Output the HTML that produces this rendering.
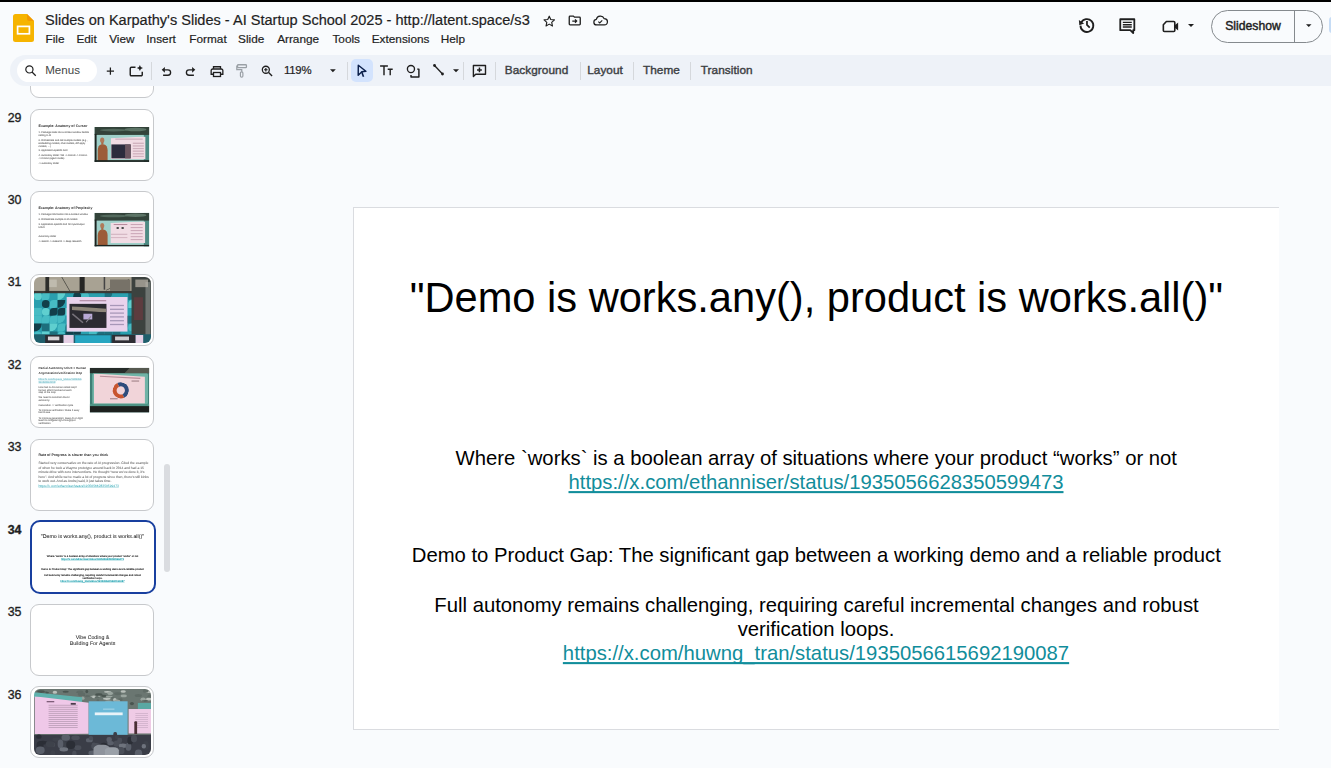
<!DOCTYPE html>
<html><head><meta charset="utf-8"><title>Slides</title>
<style>
html,body{margin:0;padding:0;}
body{width:1331px;height:768px;overflow:hidden;background:#f9fbfd;position:relative;font-family:"Liberation Sans",sans-serif;}
.t{position:absolute;line-height:1;white-space:pre;}
.ic{position:absolute;overflow:visible;}
.abs{position:absolute;}
.thumb{position:absolute;left:30px;width:122px;height:70px;border:1px solid #c7c9cc;border-radius:9px;background:#fff;overflow:hidden;}
.thumb.sel{left:29.5px;width:122px;height:70px;border:2px solid #183f9f;border-radius:10px;}
.thumb.sel .inner{top:2.8px;}
.inner{position:absolute;left:2.6px;top:2px;width:117.3px;height:66px;border-radius:6px;overflow:hidden;background:#fff;}
.num{position:absolute;font-size:11.7px;line-height:1;color:#1f1f1f;text-align:right;width:30px;left:-9px;}
.sep{position:absolute;width:1px;height:18px;top:62px;background:#d5d8dc;}
</style></head><body>
<div class="thumb" style="top:26.34px"><div class="inner" id="in28"></div></div>
<div class="thumb" style="top:108.80px"><div class="inner" id="in29"><div style="position:absolute;left:0;top:0;width:926px;height:521px;transform:scale(0.12667);transform-origin:0 0;background:#fff;overflow:hidden;will-change:transform;text-rendering:geometricPrecision;font-family:'Liberation Sans',sans-serif;"><div style="position:absolute;left:36px;top:98.3px;font-size:28px;line-height:1;white-space:pre;color:#333;font-weight:700;">Example: Anatomy of Cursor</div><div style="position:absolute;left:36px;top:149.5px;font-size:19.5px;line-height:1;white-space:pre;color:#6a6a6a;font-weight:400;-webkit-text-stroke:0.8px #888;">1. Package state into a context window before</div><div style="position:absolute;left:36px;top:172.5px;font-size:19.5px;line-height:1;white-space:pre;color:#6a6a6a;font-weight:400;-webkit-text-stroke:0.8px #888;">calling LLM</div><div style="position:absolute;left:36px;top:209.5px;font-size:19.5px;line-height:1;white-space:pre;color:#6a6a6a;font-weight:400;-webkit-text-stroke:0.8px #888;">2. Orchestrate and call multiple models (e.g.,</div><div style="position:absolute;left:36px;top:233.5px;font-size:19.5px;line-height:1;white-space:pre;color:#6a6a6a;font-weight:400;-webkit-text-stroke:0.8px #888;">embedding models, chat models, diff apply</div><div style="position:absolute;left:36px;top:257.5px;font-size:19.5px;line-height:1;white-space:pre;color:#6a6a6a;font-weight:400;-webkit-text-stroke:0.8px #888;">models, ...)</div><div style="position:absolute;left:36px;top:293.5px;font-size:19.5px;line-height:1;white-space:pre;color:#6a6a6a;font-weight:400;-webkit-text-stroke:0.8px #888;">3. Application-specific GUI</div><div style="position:absolute;left:36px;top:333.5px;font-size:19.5px;line-height:1;white-space:pre;color:#6a6a6a;font-weight:400;-webkit-text-stroke:0.8px #888;">4. Autonomy slider: Tab -> cmd+K -> Cmd+L</div><div style="position:absolute;left:36px;top:353.5px;font-size:19.5px;line-height:1;white-space:pre;color:#6a6a6a;font-weight:400;-webkit-text-stroke:0.8px #888;">-> Cmd+I (agent mode)</div><div style="position:absolute;left:36px;top:393.5px;font-size:19.5px;line-height:1;white-space:pre;color:#6a6a6a;font-weight:400;-webkit-text-stroke:0.8px #888;">-> autonomy slider</div><div style="position:absolute;left:477px;top:118px;width:433px;height:276px;overflow:hidden;"><div style="position:absolute;left:0px;top:0px;width:433px;height:276px;background:#9fd0c9;"></div><div style="position:absolute;left:389.7px;top:0px;width:43.300000000000004px;height:276px;background:#4d8a83;"></div><div style="position:absolute;left:0px;top:0px;width:433px;height:63.480000000000004px;background:#33433a;"></div><div style="position:absolute;left:43.300000000000004px;top:13.8px;width:216.5px;height:22.080000000000002px;background:#52695c;border-radius:50%;"></div><div style="position:absolute;left:238.15px;top:5.5200000000000005px;width:173.20000000000002px;height:27.6px;background:#5c7466;border-radius:50%;"></div><div style="position:absolute;left:0px;top:55.2px;width:17.32px;height:220.8px;background:#1e2420;"></div><div style="position:absolute;left:127.735px;top:74.52000000000001px;width:277.12px;height:182.16px;background:#f1dce4;clip-path:polygon(0 8%,100% 0,100% 100%,0 100%);"></div><div style="position:absolute;left:134.23px;top:138.0px;width:151.54999999999998px;height:110.4px;background:#2b2b3d;"></div><div style="position:absolute;left:242.48000000000002px;top:138.0px;width:43.300000000000004px;height:110.4px;background:#6b5560;"></div><div style="position:absolute;left:303.09999999999997px;top:124.2px;width:86.60000000000001px;height:9.66px;background:#cfb0bd;"></div><div style="position:absolute;left:303.09999999999997px;top:144.9px;width:86.60000000000001px;height:9.66px;background:#cfb0bd;"></div><div style="position:absolute;left:303.09999999999997px;top:165.6px;width:86.60000000000001px;height:9.66px;background:#cfb0bd;"></div><div style="position:absolute;left:303.09999999999997px;top:186.3px;width:86.60000000000001px;height:9.66px;background:#cfb0bd;"></div><div style="position:absolute;left:303.09999999999997px;top:207.0px;width:86.60000000000001px;height:9.66px;background:#cfb0bd;"></div><div style="position:absolute;left:303.09999999999997px;top:227.7px;width:86.60000000000001px;height:9.66px;background:#cfb0bd;"></div><div style="position:absolute;left:164.54px;top:91.08px;width:216.5px;height:11.040000000000001px;background:#d3b5c2;"></div><div style="position:absolute;left:25.98px;top:138.0px;width:77.94px;height:132.48px;background:#9c5c38;border-radius:35% 35% 0 0;"></div><div style="position:absolute;left:45.464999999999996px;top:82.8px;width:32.475px;height:44.160000000000004px;background:#b07a5a;border-radius:50%;"></div><div style="position:absolute;left:54.125px;top:121.44px;width:17.32px;height:22.080000000000002px;background:#a76c4a;"></div><div style="position:absolute;left:0px;top:262.2px;width:433px;height:13.8px;background:#1d2420;"></div></div></div></div></div>
<div class="t" style="left:-178.50px;width:200px;text-align:right;top:111.50px;font-size:12.4px;color:#1f1f1f;font-weight:400;-webkit-text-stroke:0.35px #1f1f1f;">29</div>
<div class="thumb" style="top:191.26px"><div class="inner" id="in30"><div style="position:absolute;left:0;top:0;width:926px;height:521px;transform:scale(0.12667);transform-origin:0 0;background:#fff;overflow:hidden;will-change:transform;text-rendering:geometricPrecision;font-family:'Liberation Sans',sans-serif;"><div style="position:absolute;left:35px;top:96.3px;font-size:28px;line-height:1;white-space:pre;color:#333;font-weight:700;">Example: Anatomy of Perplexity</div><div style="position:absolute;left:35px;top:153.5px;font-size:19.5px;line-height:1;white-space:pre;color:#6a6a6a;font-weight:400;-webkit-text-stroke:0.8px #888;">1. Package information into a context window</div><div style="position:absolute;left:35px;top:188.5px;font-size:19.5px;line-height:1;white-space:pre;color:#6a6a6a;font-weight:400;-webkit-text-stroke:0.8px #888;">2. Orchestrate multiple LLM models</div><div style="position:absolute;left:35px;top:229.5px;font-size:19.5px;line-height:1;white-space:pre;color:#6a6a6a;font-weight:400;-webkit-text-stroke:0.8px #888;">3. Application-specific GUI for input/output</div><div style="position:absolute;left:35px;top:249.5px;font-size:19.5px;line-height:1;white-space:pre;color:#6a6a6a;font-weight:400;-webkit-text-stroke:0.8px #888;">UI/UX</div><div style="position:absolute;left:35px;top:324.5px;font-size:19.5px;line-height:1;white-space:pre;color:#6a6a6a;font-weight:400;-webkit-text-stroke:0.8px #888;">Autonomy slider</div><div style="position:absolute;left:35px;top:366.5px;font-size:19.5px;line-height:1;white-space:pre;color:#6a6a6a;font-weight:400;-webkit-text-stroke:0.8px #888;">-> search -> research -> deep research</div><div style="position:absolute;left:477px;top:149px;width:433px;height:266px;overflow:hidden;"><div style="position:absolute;left:0px;top:0px;width:433px;height:266px;background:#9fd0c9;"></div><div style="position:absolute;left:389.7px;top:0px;width:43.300000000000004px;height:266px;background:#4d8a83;"></div><div style="position:absolute;left:0px;top:0px;width:433px;height:61.18px;background:#33433a;"></div><div style="position:absolute;left:43.300000000000004px;top:13.3px;width:216.5px;height:21.28px;background:#52695c;border-radius:50%;"></div><div style="position:absolute;left:238.15px;top:5.32px;width:173.20000000000002px;height:26.6px;background:#5c7466;border-radius:50%;"></div><div style="position:absolute;left:0px;top:53.2px;width:17.32px;height:212.8px;background:#1e2420;"></div><div style="position:absolute;left:125.57px;top:66.5px;width:277.12px;height:172.9px;background:#f1dce4;clip-path:polygon(0 8%,100% 0,100% 100%,0 100%);"></div><div style="position:absolute;left:173.20000000000002px;top:111.72px;width:21.650000000000002px;height:15.959999999999999px;background:#444;border-radius:50%;"></div><div style="position:absolute;left:212.17px;top:111.72px;width:21.650000000000002px;height:15.959999999999999px;background:#444;border-radius:50%;"></div><div style="position:absolute;left:285.78000000000003px;top:87.78px;width:95.26px;height:7.9799999999999995px;background:#c9a5b5;"></div><div style="position:absolute;left:285.78000000000003px;top:111.72000000000001px;width:95.26px;height:7.9799999999999995px;background:#c9a5b5;"></div><div style="position:absolute;left:285.78000000000003px;top:135.66px;width:95.26px;height:7.9799999999999995px;background:#c9a5b5;"></div><div style="position:absolute;left:285.78000000000003px;top:159.60000000000002px;width:95.26px;height:7.9799999999999995px;background:#c9a5b5;"></div><div style="position:absolute;left:285.78000000000003px;top:183.54px;width:95.26px;height:7.9799999999999995px;background:#c9a5b5;"></div><div style="position:absolute;left:285.78000000000003px;top:207.48000000000002px;width:95.26px;height:7.9799999999999995px;background:#c9a5b5;"></div><div style="position:absolute;left:151.54999999999998px;top:87.78px;width:108.25px;height:7.9799999999999995px;background:#b88a9c;"></div><div style="position:absolute;left:129.9px;top:164.92px;width:129.9px;height:7.9799999999999995px;background:#d0b0bd;"></div><div style="position:absolute;left:129.9px;top:191.51999999999998px;width:129.9px;height:7.9799999999999995px;background:#d0b0bd;"></div><div style="position:absolute;left:25.98px;top:133.0px;width:77.94px;height:127.67999999999999px;background:#9c5c38;border-radius:35% 35% 0 0;"></div><div style="position:absolute;left:45.464999999999996px;top:79.8px;width:32.475px;height:42.56px;background:#b07a5a;border-radius:50%;"></div><div style="position:absolute;left:54.125px;top:117.04px;width:17.32px;height:21.28px;background:#a76c4a;"></div><div style="position:absolute;left:0px;top:252.7px;width:433px;height:13.3px;background:#1d2420;"></div></div></div></div></div>
<div class="t" style="left:-178.50px;width:200px;text-align:right;top:193.96px;font-size:12.4px;color:#1f1f1f;font-weight:400;-webkit-text-stroke:0.35px #1f1f1f;">30</div>
<div class="thumb" style="top:273.72px"><div class="inner" id="in31"><div style="position:absolute;left:0;top:0;width:926px;height:521px;transform:scale(0.12667);transform-origin:0 0;background:#fff;overflow:hidden;will-change:transform;text-rendering:geometricPrecision;font-family:'Liberation Sans',sans-serif;"><div style="position:absolute;left:0px;top:0px;width:926px;height:521px;background:#2a9fae;"></div><div style="position:absolute;left:0px;top:120px;width:62px;height:62px;background:#5fcfcf;border-radius:50%;"></div><div style="position:absolute;left:0px;top:182px;width:62px;height:62px;background:#2a9fae;border-radius:50% 0;"></div><div style="position:absolute;left:0px;top:244px;width:62px;height:62px;background:#47bcc4;border-radius:0;"></div><div style="position:absolute;left:0px;top:306px;width:62px;height:62px;background:#47bcc4;border-radius:0;"></div><div style="position:absolute;left:0px;top:368px;width:62px;height:62px;background:#123f4a;border-radius:0 0 100% 0;"></div><div style="position:absolute;left:0px;top:430px;width:62px;height:62px;background:#47bcc4;border-radius:50%;"></div><div style="position:absolute;left:0px;top:492px;width:62px;height:62px;background:#5fcfcf;border-radius:50% 0;"></div><div style="position:absolute;left:62px;top:120px;width:62px;height:62px;background:#47bcc4;border-radius:50% 0;"></div><div style="position:absolute;left:62px;top:182px;width:62px;height:62px;background:#123f4a;border-radius:50%;"></div><div style="position:absolute;left:62px;top:244px;width:62px;height:62px;background:#5fcfcf;border-radius:50%;"></div><div style="position:absolute;left:62px;top:306px;width:62px;height:62px;background:#47bcc4;border-radius:50% 0;"></div><div style="position:absolute;left:62px;top:368px;width:62px;height:62px;background:#1d6f7d;border-radius:0;"></div><div style="position:absolute;left:62px;top:430px;width:62px;height:62px;background:#5fcfcf;border-radius:0;"></div><div style="position:absolute;left:62px;top:492px;width:62px;height:62px;background:#2a9fae;border-radius:0;"></div><div style="position:absolute;left:124px;top:120px;width:62px;height:62px;background:#2a9fae;border-radius:50% 0;"></div><div style="position:absolute;left:124px;top:182px;width:62px;height:62px;background:#47bcc4;border-radius:50% 0;"></div><div style="position:absolute;left:124px;top:244px;width:62px;height:62px;background:#123f4a;border-radius:50% 0;"></div><div style="position:absolute;left:124px;top:306px;width:62px;height:62px;background:#47bcc4;border-radius:50% 0;"></div><div style="position:absolute;left:124px;top:368px;width:62px;height:62px;background:#5fcfcf;border-radius:0 0 100% 0;"></div><div style="position:absolute;left:124px;top:430px;width:62px;height:62px;background:#1d6f7d;border-radius:0;"></div><div style="position:absolute;left:124px;top:492px;width:62px;height:62px;background:#5fcfcf;border-radius:50% 0;"></div><div style="position:absolute;left:186px;top:120px;width:62px;height:62px;background:#5fcfcf;border-radius:0 0 100% 0;"></div><div style="position:absolute;left:186px;top:182px;width:62px;height:62px;background:#123f4a;border-radius:0 0 100% 0;"></div><div style="position:absolute;left:186px;top:244px;width:62px;height:62px;background:#123f4a;border-radius:50% 0;"></div><div style="position:absolute;left:186px;top:306px;width:62px;height:62px;background:#47bcc4;border-radius:0 0 100% 0;"></div><div style="position:absolute;left:186px;top:368px;width:62px;height:62px;background:#47bcc4;border-radius:50% 0;"></div><div style="position:absolute;left:186px;top:430px;width:62px;height:62px;background:#47bcc4;border-radius:50%;"></div><div style="position:absolute;left:186px;top:492px;width:62px;height:62px;background:#2a9fae;border-radius:0;"></div><div style="position:absolute;left:248px;top:120px;width:62px;height:62px;background:#2a9fae;border-radius:50%;"></div><div style="position:absolute;left:248px;top:182px;width:62px;height:62px;background:#2a9fae;border-radius:0;"></div><div style="position:absolute;left:248px;top:244px;width:62px;height:62px;background:#5fcfcf;border-radius:0 0 100% 0;"></div><div style="position:absolute;left:248px;top:306px;width:62px;height:62px;background:#2a9fae;border-radius:0;"></div><div style="position:absolute;left:248px;top:368px;width:62px;height:62px;background:#1d6f7d;border-radius:50% 0;"></div><div style="position:absolute;left:248px;top:430px;width:62px;height:62px;background:#123f4a;border-radius:0;"></div><div style="position:absolute;left:248px;top:492px;width:62px;height:62px;background:#2a9fae;border-radius:0;"></div><div style="position:absolute;left:310px;top:120px;width:62px;height:62px;background:#123f4a;border-radius:50%;"></div><div style="position:absolute;left:310px;top:182px;width:62px;height:62px;background:#1d6f7d;border-radius:0 0 100% 0;"></div><div style="position:absolute;left:310px;top:244px;width:62px;height:62px;background:#123f4a;border-radius:50% 0;"></div><div style="position:absolute;left:310px;top:306px;width:62px;height:62px;background:#1d6f7d;border-radius:0;"></div><div style="position:absolute;left:310px;top:368px;width:62px;height:62px;background:#47bcc4;border-radius:0;"></div><div style="position:absolute;left:310px;top:430px;width:62px;height:62px;background:#123f4a;border-radius:0 0 100% 0;"></div><div style="position:absolute;left:310px;top:492px;width:62px;height:62px;background:#47bcc4;border-radius:0 0 100% 0;"></div><div style="position:absolute;left:372px;top:120px;width:62px;height:62px;background:#47bcc4;border-radius:50%;"></div><div style="position:absolute;left:372px;top:182px;width:62px;height:62px;background:#1d6f7d;border-radius:0 0 100% 0;"></div><div style="position:absolute;left:372px;top:244px;width:62px;height:62px;background:#1d6f7d;border-radius:0;"></div><div style="position:absolute;left:372px;top:306px;width:62px;height:62px;background:#1d6f7d;border-radius:0;"></div><div style="position:absolute;left:372px;top:368px;width:62px;height:62px;background:#5fcfcf;border-radius:50% 0;"></div><div style="position:absolute;left:372px;top:430px;width:62px;height:62px;background:#2a9fae;border-radius:0 0 100% 0;"></div><div style="position:absolute;left:372px;top:492px;width:62px;height:62px;background:#5fcfcf;border-radius:0;"></div><div style="position:absolute;left:434px;top:120px;width:62px;height:62px;background:#2a9fae;border-radius:0 0 100% 0;"></div><div style="position:absolute;left:434px;top:182px;width:62px;height:62px;background:#2a9fae;border-radius:50%;"></div><div style="position:absolute;left:434px;top:244px;width:62px;height:62px;background:#123f4a;border-radius:50% 0;"></div><div style="position:absolute;left:434px;top:306px;width:62px;height:62px;background:#123f4a;border-radius:50% 0;"></div><div style="position:absolute;left:434px;top:368px;width:62px;height:62px;background:#47bcc4;border-radius:0;"></div><div style="position:absolute;left:434px;top:430px;width:62px;height:62px;background:#47bcc4;border-radius:0 0 100% 0;"></div><div style="position:absolute;left:434px;top:492px;width:62px;height:62px;background:#123f4a;border-radius:50%;"></div><div style="position:absolute;left:496px;top:120px;width:62px;height:62px;background:#2a9fae;border-radius:50% 0;"></div><div style="position:absolute;left:496px;top:182px;width:62px;height:62px;background:#2a9fae;border-radius:0 0 100% 0;"></div><div style="position:absolute;left:496px;top:244px;width:62px;height:62px;background:#47bcc4;border-radius:0 0 100% 0;"></div><div style="position:absolute;left:496px;top:306px;width:62px;height:62px;background:#1d6f7d;border-radius:50% 0;"></div><div style="position:absolute;left:496px;top:368px;width:62px;height:62px;background:#47bcc4;border-radius:0 0 100% 0;"></div><div style="position:absolute;left:496px;top:430px;width:62px;height:62px;background:#1d6f7d;border-radius:50% 0;"></div><div style="position:absolute;left:496px;top:492px;width:62px;height:62px;background:#47bcc4;border-radius:50%;"></div><div style="position:absolute;left:558px;top:120px;width:62px;height:62px;background:#1d6f7d;border-radius:0 0 100% 0;"></div><div style="position:absolute;left:558px;top:182px;width:62px;height:62px;background:#123f4a;border-radius:0 0 100% 0;"></div><div style="position:absolute;left:558px;top:244px;width:62px;height:62px;background:#2a9fae;border-radius:0 0 100% 0;"></div><div style="position:absolute;left:558px;top:306px;width:62px;height:62px;background:#123f4a;border-radius:0;"></div><div style="position:absolute;left:558px;top:368px;width:62px;height:62px;background:#47bcc4;border-radius:0;"></div><div style="position:absolute;left:558px;top:430px;width:62px;height:62px;background:#1d6f7d;border-radius:0 0 100% 0;"></div><div style="position:absolute;left:558px;top:492px;width:62px;height:62px;background:#2a9fae;border-radius:50% 0;"></div><div style="position:absolute;left:620px;top:120px;width:62px;height:62px;background:#2a9fae;border-radius:0 0 100% 0;"></div><div style="position:absolute;left:620px;top:182px;width:62px;height:62px;background:#5fcfcf;border-radius:0 0 100% 0;"></div><div style="position:absolute;left:620px;top:244px;width:62px;height:62px;background:#5fcfcf;border-radius:0 0 100% 0;"></div><div style="position:absolute;left:620px;top:306px;width:62px;height:62px;background:#2a9fae;border-radius:0 0 100% 0;"></div><div style="position:absolute;left:620px;top:368px;width:62px;height:62px;background:#2a9fae;border-radius:50% 0;"></div><div style="position:absolute;left:620px;top:430px;width:62px;height:62px;background:#1d6f7d;border-radius:0;"></div><div style="position:absolute;left:620px;top:492px;width:62px;height:62px;background:#47bcc4;border-radius:50%;"></div><div style="position:absolute;left:682px;top:120px;width:62px;height:62px;background:#2a9fae;border-radius:50%;"></div><div style="position:absolute;left:682px;top:182px;width:62px;height:62px;background:#2a9fae;border-radius:50%;"></div><div style="position:absolute;left:682px;top:244px;width:62px;height:62px;background:#2a9fae;border-radius:50%;"></div><div style="position:absolute;left:682px;top:306px;width:62px;height:62px;background:#123f4a;border-radius:0;"></div><div style="position:absolute;left:682px;top:368px;width:62px;height:62px;background:#1d6f7d;border-radius:0 0 100% 0;"></div><div style="position:absolute;left:682px;top:430px;width:62px;height:62px;background:#2a9fae;border-radius:50%;"></div><div style="position:absolute;left:682px;top:492px;width:62px;height:62px;background:#123f4a;border-radius:50%;"></div><div style="position:absolute;left:744px;top:120px;width:62px;height:62px;background:#1d6f7d;border-radius:0 0 100% 0;"></div><div style="position:absolute;left:744px;top:182px;width:62px;height:62px;background:#5fcfcf;border-radius:50% 0;"></div><div style="position:absolute;left:744px;top:244px;width:62px;height:62px;background:#2a9fae;border-radius:50%;"></div><div style="position:absolute;left:744px;top:306px;width:62px;height:62px;background:#1d6f7d;border-radius:0;"></div><div style="position:absolute;left:744px;top:368px;width:62px;height:62px;background:#47bcc4;border-radius:50%;"></div><div style="position:absolute;left:744px;top:430px;width:62px;height:62px;background:#2a9fae;border-radius:50%;"></div><div style="position:absolute;left:744px;top:492px;width:62px;height:62px;background:#2a9fae;border-radius:0 0 100% 0;"></div><div style="position:absolute;left:0px;top:0px;width:926px;height:125px;background:#a8a293;"></div><div style="position:absolute;left:0px;top:110px;width:926px;height:18px;background:#3a3a36;"></div><div style="position:absolute;left:90px;top:0px;width:30px;height:125px;background:#2d2d2a;"></div><div style="position:absolute;left:360px;top:0px;width:40px;height:125px;background:#262624;"></div><div style="position:absolute;left:550px;top:0px;width:12px;height:100px;background:#444;"></div><div style="position:absolute;left:180px;top:60px;width:150px;height:5px;background:#3d3d38;transform:rotate(60deg);"></div><div style="position:absolute;left:560px;top:60px;width:200px;height:5px;background:#3d3d38;transform:rotate(-25deg);"></div><div style="position:absolute;left:600px;top:20px;width:160px;height:90px;background:#777268;"></div><div style="position:absolute;left:120px;top:20px;width:60px;height:60px;background:#cfcbc0;opacity:0.6;"></div><div style="position:absolute;left:770px;top:0px;width:156px;height:521px;background:#3c423f;"></div><div style="position:absolute;left:790px;top:160px;width:70px;height:180px;background:#6b3a40;opacity:0.7;"></div><div style="position:absolute;left:880px;top:40px;width:40px;height:480px;background:#6f7572;"></div><div style="position:absolute;left:800px;top:20px;width:100px;height:60px;background:#bdb8ac;opacity:0.7;"></div><div style="position:absolute;left:258px;top:158px;width:480px;height:273px;background:#e9d3ec;"></div><div style="position:absolute;left:280px;top:212px;width:292px;height:190px;background:#2c2b31;"></div><div style="position:absolute;left:300px;top:230px;width:272px;height:50px;background:#8d8579;clip-path:polygon(0 0,100% 40%,100% 100%,0 60%);"></div><div style="position:absolute;left:390px;top:290px;width:70px;height:45px;background:#b9a9d6;"></div><div style="position:absolute;left:290px;top:320px;width:110px;height:12px;background:#77727a;transform:rotate(40deg);"></div><div style="position:absolute;left:400px;top:330px;width:60px;height:8px;background:#8a8590;transform:rotate(-50deg);"></div><div style="position:absolute;left:600px;top:220px;width:110px;height:10px;background:#a797b8;"></div><div style="position:absolute;left:600px;top:250px;width:110px;height:10px;background:#a797b8;"></div><div style="position:absolute;left:600px;top:280px;width:110px;height:10px;background:#a797b8;"></div><div style="position:absolute;left:600px;top:310px;width:110px;height:10px;background:#a797b8;"></div><div style="position:absolute;left:600px;top:340px;width:110px;height:10px;background:#a797b8;"></div><div style="position:absolute;left:600px;top:370px;width:110px;height:10px;background:#a797b8;"></div><div style="position:absolute;left:360px;top:182px;width:210px;height:10px;background:#b48fa8;"></div><div style="position:absolute;left:0px;top:452px;width:926px;height:69px;background:#1f5f6c;"></div><div style="position:absolute;left:88px;top:458px;width:145px;height:63px;background:#2d2d33;"></div><div style="position:absolute;left:110px;top:470px;width:90px;height:30px;background:#d9d4d8;"></div><div style="position:absolute;left:233px;top:458px;width:80px;height:63px;background:#e6d0e6;"></div><div style="position:absolute;left:325px;top:460px;width:280px;height:61px;background:#27a6c1;"></div><div style="position:absolute;left:617px;top:458px;width:185px;height:63px;background:#2d2d33;"></div><div style="position:absolute;left:640px;top:470px;width:110px;height:30px;background:#cfcacf;"></div><div style="position:absolute;left:802px;top:458px;width:60px;height:63px;background:#e6d0e6;"></div></div></div></div>
<div class="t" style="left:-178.50px;width:200px;text-align:right;top:276.42px;font-size:12.4px;color:#1f1f1f;font-weight:400;-webkit-text-stroke:0.35px #1f1f1f;">31</div>
<div class="thumb" style="top:356.18px"><div class="inner" id="in32"><div style="position:absolute;left:0;top:0;width:926px;height:521px;transform:scale(0.12667);transform-origin:0 0;background:#fff;overflow:hidden;will-change:transform;text-rendering:geometricPrecision;font-family:'Liberation Sans',sans-serif;"><div style="position:absolute;left:35px;top:62.7px;font-size:24px;line-height:1;white-space:pre;color:#333;font-weight:700;">Partial Autonomy UI/UX + Human</div><div style="position:absolute;left:35px;top:97.7px;font-size:24px;line-height:1;white-space:pre;color:#333;font-weight:700;">AI generation/verification loop</div><div style="position:absolute;left:35px;top:153.1px;font-size:20px;line-height:1;white-space:pre;color:#5fb5c3;font-weight:400;text-decoration:underline;-webkit-text-stroke:0.8px #8fcbd5;">https://x.com/Kuyaqs_/status/1935056</div><div style="position:absolute;left:35px;top:175.1px;font-size:20px;line-height:1;white-space:pre;color:#5fb5c3;font-weight:400;text-decoration:underline;-webkit-text-stroke:0.8px #8fcbd5;">350298604208</div><div style="position:absolute;left:35px;top:212.1px;font-size:20px;line-height:1;white-space:pre;color:#666;font-weight:400;-webkit-text-stroke:0.6px #888;">How fast is AI-Human collab loop?</div><div style="position:absolute;left:35px;top:233.1px;font-size:20px;line-height:1;white-space:pre;color:#666;font-weight:400;-webkit-text-stroke:0.6px #888;">human effort involved at each</div><div style="position:absolute;left:35px;top:254.1px;font-size:20px;line-height:1;white-space:pre;color:#666;font-weight:400;-webkit-text-stroke:0.6px #888;">step of the loop</div><div style="position:absolute;left:35px;top:294.1px;font-size:20px;line-height:1;white-space:pre;color:#666;font-weight:400;-webkit-text-stroke:0.6px #888;">We need to constrain the AI</div><div style="position:absolute;left:35px;top:314.1px;font-size:20px;line-height:1;white-space:pre;color:#666;font-weight:400;-webkit-text-stroke:0.6px #888;">autonomy</div><div style="position:absolute;left:35px;top:352.1px;font-size:20px;line-height:1;white-space:pre;color:#666;font-weight:400;-webkit-text-stroke:0.6px #888;">Generation -> verification cycle</div><div style="position:absolute;left:35px;top:394.1px;font-size:20px;line-height:1;white-space:pre;color:#666;font-weight:400;-webkit-text-stroke:0.6px #888;">To improve verification: Make it easy</div><div style="position:absolute;left:35px;top:414.1px;font-size:20px;line-height:1;white-space:pre;color:#666;font-weight:400;-webkit-text-stroke:0.6px #888;">fast to see</div><div style="position:absolute;left:35px;top:455.1px;font-size:20px;line-height:1;white-space:pre;color:#666;font-weight:400;-webkit-text-stroke:0.6px #888;">To improve generation: Keep AI on tight</div><div style="position:absolute;left:35px;top:474.1px;font-size:20px;line-height:1;white-space:pre;color:#666;font-weight:400;-webkit-text-stroke:0.6px #888;">leash to mitigate high-throughput</div><div style="position:absolute;left:35px;top:496.1px;font-size:20px;line-height:1;white-space:pre;color:#666;font-weight:400;-webkit-text-stroke:0.6px #888;">verification</div><div style="position:absolute;left:440px;top:70px;width:470px;height:353px;overflow:hidden;"><div style="position:absolute;left:0px;top:0px;width:470px;height:353px;background:#3f7f76;"></div><div style="position:absolute;left:20px;top:30px;width:440px;height:270px;background:#6fb3a6;border-radius:30px;"></div><div style="position:absolute;left:0px;top:0px;width:470px;height:42px;background:#262c29;"></div><div style="position:absolute;left:250px;top:0px;width:220px;height:45px;background:#7d7f70;opacity:0.55;clip-path:polygon(10% 100%,30% 0,100% 0,100% 100%);"></div><div style="position:absolute;left:33px;top:44px;width:403px;height:240px;background:#f1d4d9;clip-path:polygon(0 0,100% 11%,100% 100%,0 100%);"></div><div style="position:absolute;left:80px;top:70px;width:320px;height:9px;background:#b98d98;transform:rotate(3deg);"></div><div style="position:absolute;left:330px;top:100px;width:60px;height:8px;background:#9a7a80;"></div><div style="position:absolute;left:160px;top:240px;width:60px;height:8px;background:#9a7a80;"></div><div style="position:absolute;left:181px;top:114px;width:128px;height:128px;background:transparent;border-radius:50%;border:31px solid #2f4c7c;border-bottom-color:#c8552f;border-left-color:#c8552f;box-sizing:border-box;transform:rotate(20deg);"></div><div style="position:absolute;left:0px;top:300px;width:470px;height:53px;background:#1c201e;"></div><div style="position:absolute;left:0px;top:284px;width:470px;height:18px;background:#4f9486;"></div></div></div></div></div>
<div class="t" style="left:-178.50px;width:200px;text-align:right;top:358.88px;font-size:12.4px;color:#1f1f1f;font-weight:400;-webkit-text-stroke:0.35px #1f1f1f;">32</div>
<div class="thumb" style="top:438.64px"><div class="inner" id="in33"><div style="position:absolute;left:0;top:0;width:926px;height:521px;transform:scale(0.12667);transform-origin:0 0;background:#fff;overflow:hidden;will-change:transform;text-rendering:geometricPrecision;font-family:'Liberation Sans',sans-serif;"><div style="position:absolute;left:35px;top:88.3px;font-size:28px;line-height:1;white-space:pre;color:#333;font-weight:700;">Rate of Progress is slower than you think</div><div style="position:absolute;left:35px;top:151.6px;font-size:26.5px;line-height:1;white-space:pre;color:#666;font-weight:400;-webkit-text-stroke:0.6px #888;">Started very conservative on the rate of AI progression. Cited the example</div><div style="position:absolute;left:35px;top:188.6px;font-size:26.5px;line-height:1;white-space:pre;color:#666;font-weight:400;-webkit-text-stroke:0.6px #888;">of when he took a Waymo prototype around back in 2014 and had a 15</div><div style="position:absolute;left:35px;top:223.6px;font-size:26.5px;line-height:1;white-space:pre;color:#666;font-weight:400;-webkit-text-stroke:0.6px #888;">minute drive with zero interventions. He thought “wow we've done it, it's</div><div style="position:absolute;left:35px;top:259.6px;font-size:26.5px;line-height:1;white-space:pre;color:#666;font-weight:400;-webkit-text-stroke:0.6px #888;">here”. And while we've made a lot of progress since then, there's still kinks</div><div style="position:absolute;left:35px;top:296.6px;font-size:26.5px;line-height:1;white-space:pre;color:#666;font-weight:400;-webkit-text-stroke:0.6px #888;">to work out. And as Andrej said, it just takes time.</div><div style="position:absolute;left:35px;top:332.0px;font-size:26px;line-height:1;white-space:pre;color:#2aa5b3;font-weight:400;text-decoration:underline;">https://x.com/ethanniser/status/1935056628350599473</div></div></div></div>
<div class="t" style="left:-178.50px;width:200px;text-align:right;top:441.34px;font-size:12.4px;color:#1f1f1f;font-weight:400;-webkit-text-stroke:0.35px #1f1f1f;">33</div>
<div class="thumb sel" style="top:520.10px"><div class="inner" id="in34"><div style="position:absolute;left:0;top:0;width:926px;height:521px;transform:scale(0.12667);transform-origin:0 0;background:#fff;overflow:hidden;will-change:transform;text-rendering:geometricPrecision;font-family:'Liberation Sans',sans-serif;"><div style="position:absolute;left:-138.5px;width:1200px;text-align:center;top:68.3px;font-size:41.7px;line-height:1;white-space:pre;color:#222;font-weight:400;-webkit-text-stroke:0.4px #333;">"Demo is works.any(), product is works.all()"</div><div style="position:absolute;left:-137.70000000000005px;width:1200px;text-align:center;top:239.4px;font-size:20.3px;line-height:1;white-space:pre;color:#222;font-weight:400;-webkit-text-stroke:0.9px #333;">Where `works` is a boolean array of situations where your product “works” or not</div><div style="position:absolute;left:-138px;width:1200px;text-align:center;top:264.0px;font-size:20.3px;line-height:1;white-space:pre;color:#0097a7;font-weight:400;text-decoration:underline;-webkit-text-stroke:0.9px #2aa5b3;">https://x.com/ethanniser/status/1935056628350599473</div><div style="position:absolute;left:-137.70000000000005px;width:1200px;text-align:center;top:337.2px;font-size:20.3px;line-height:1;white-space:pre;color:#222;font-weight:400;-webkit-text-stroke:0.9px #333;">Demo to Product Gap: The significant gap between a working demo and a reliable product</div><div style="position:absolute;left:-137.5px;width:1200px;text-align:center;top:386.0px;font-size:20.3px;line-height:1;white-space:pre;color:#222;font-weight:400;-webkit-text-stroke:0.9px #333;">Full autonomy remains challenging, requiring careful incremental changes and robust</div><div style="position:absolute;left:-138px;width:1200px;text-align:center;top:410.0px;font-size:20.3px;line-height:1;white-space:pre;color:#222;font-weight:400;-webkit-text-stroke:0.9px #333;">verification loops.</div><div style="position:absolute;left:-138px;width:1200px;text-align:center;top:434.2px;font-size:20.3px;line-height:1;white-space:pre;color:#0097a7;font-weight:400;text-decoration:underline;-webkit-text-stroke:0.9px #2aa5b3;">https://x.com/huwng_tran/status/1935056615692190087</div></div></div></div>
<div class="t" style="left:-178.50px;width:200px;text-align:right;top:523.80px;font-size:12.4px;color:#1f1f1f;font-weight:700;-webkit-text-stroke:0.35px #1f1f1f;">34</div>
<div class="thumb" style="top:603.56px"><div class="inner" id="in35"><div style="position:absolute;left:0;top:0;width:926px;height:521px;transform:scale(0.12667);transform-origin:0 0;background:#fff;overflow:hidden;will-change:transform;text-rendering:geometricPrecision;font-family:'Liberation Sans',sans-serif;"><div style="position:absolute;left:-138px;width:1200px;text-align:center;top:214.9px;font-size:41.5px;line-height:1;white-space:pre;color:#222;font-weight:400;-webkit-text-stroke:0.3px #333;">Vibe Coding &amp;</div><div style="position:absolute;left:-138px;width:1200px;text-align:center;top:264.9px;font-size:41.5px;line-height:1;white-space:pre;color:#222;font-weight:400;-webkit-text-stroke:0.3px #333;">Building For Agents</div></div></div></div>
<div class="t" style="left:-178.50px;width:200px;text-align:right;top:606.26px;font-size:12.4px;color:#1f1f1f;font-weight:400;-webkit-text-stroke:0.35px #1f1f1f;">35</div>
<div class="thumb" style="top:686.02px"><div class="inner" id="in36"><div style="position:absolute;left:0;top:0;width:926px;height:521px;transform:scale(0.12667);transform-origin:0 0;background:#fff;overflow:hidden;will-change:transform;text-rendering:geometricPrecision;font-family:'Liberation Sans',sans-serif;"><div style="position:absolute;left:0px;top:0px;width:926px;height:521px;background:#6a7671;"></div><div style="position:absolute;left:331px;top:19px;width:23px;height:12px;background:#5f6b66;border-radius:50%;"></div><div style="position:absolute;left:840px;top:68px;width:43px;height:28px;background:#9aa59f;border-radius:50%;"></div><div style="position:absolute;left:59px;top:116px;width:22px;height:12px;background:#4a5550;border-radius:50%;"></div><div style="position:absolute;left:444px;top:53px;width:35px;height:12px;background:#9aa59f;border-radius:50%;"></div><div style="position:absolute;left:564px;top:54px;width:56px;height:13px;background:#9aa59f;border-radius:50%;"></div><div style="position:absolute;left:228px;top:80px;width:56px;height:28px;background:#9aa59f;border-radius:50%;"></div><div style="position:absolute;left:406px;top:6px;width:22px;height:27px;background:#4a5550;border-radius:50%;"></div><div style="position:absolute;left:879px;top:17px;width:46px;height:14px;background:#b9c0bb;border-radius:50%;"></div><div style="position:absolute;left:553px;top:15px;width:55px;height:15px;background:#b9c0bb;border-radius:50%;"></div><div style="position:absolute;left:105px;top:74px;width:43px;height:13px;background:#4a5550;border-radius:50%;"></div><div style="position:absolute;left:560px;top:91px;width:56px;height:11px;background:#9aa59f;border-radius:50%;"></div><div style="position:absolute;left:633px;top:26px;width:54px;height:23px;background:#5f6b66;border-radius:50%;"></div><div style="position:absolute;left:795px;top:40px;width:57px;height:24px;background:#5f6b66;border-radius:50%;"></div><div style="position:absolute;left:370px;top:38px;width:31px;height:17px;background:#4a5550;border-radius:50%;"></div><div style="position:absolute;left:83px;top:73px;width:53px;height:25px;background:#b9c0bb;border-radius:50%;"></div><div style="position:absolute;left:896px;top:43px;width:38px;height:29px;background:#5f6b66;border-radius:50%;"></div><div style="position:absolute;left:74px;top:15px;width:30px;height:20px;background:#5f6b66;border-radius:50%;"></div><div style="position:absolute;left:155px;top:119px;width:46px;height:11px;background:#5f6b66;border-radius:50%;"></div><div style="position:absolute;left:684px;top:9px;width:41px;height:21px;background:#b9c0bb;border-radius:50%;"></div><div style="position:absolute;left:608px;top:63px;width:24px;height:12px;background:#5f6b66;border-radius:50%;"></div><div style="position:absolute;left:276px;top:60px;width:23px;height:19px;background:#9aa59f;border-radius:50%;"></div><div style="position:absolute;left:662px;top:73px;width:38px;height:22px;background:#5f6b66;border-radius:50%;"></div><div style="position:absolute;left:684px;top:44px;width:49px;height:21px;background:#9aa59f;border-radius:50%;"></div><div style="position:absolute;left:172px;top:78px;width:51px;height:11px;background:#9aa59f;border-radius:50%;"></div><div style="position:absolute;left:223px;top:98px;width:28px;height:17px;background:#b9c0bb;border-radius:50%;"></div><div style="position:absolute;left:407px;top:50px;width:25px;height:15px;background:#5f6b66;border-radius:50%;"></div><div style="position:absolute;left:459px;top:51px;width:28px;height:23px;background:#b9c0bb;border-radius:50%;"></div><div style="position:absolute;left:884px;top:70px;width:46px;height:21px;background:#b9c0bb;border-radius:50%;"></div><div style="position:absolute;left:699px;top:113px;width:34px;height:14px;background:#5f6b66;border-radius:50%;"></div><div style="position:absolute;left:84px;top:22px;width:34px;height:17px;background:#4a5550;border-radius:50%;"></div><div style="position:absolute;left:12px;top:62px;width:36px;height:19px;background:#4a5550;border-radius:50%;"></div><div style="position:absolute;left:4px;top:18px;width:54px;height:21px;background:#5f6b66;border-radius:50%;"></div><div style="position:absolute;left:624px;top:72px;width:28px;height:26px;background:#b9c0bb;border-radius:50%;"></div><div style="position:absolute;left:632px;top:83px;width:49px;height:27px;background:#9aa59f;border-radius:50%;"></div><div style="position:absolute;left:401px;top:50px;width:45px;height:13px;background:#5f6b66;border-radius:50%;"></div><div style="position:absolute;left:493px;top:81px;width:23px;height:16px;background:#5f6b66;border-radius:50%;"></div><div style="position:absolute;left:68px;top:26px;width:30px;height:13px;background:#5f6b66;border-radius:50%;"></div><div style="position:absolute;left:348px;top:76px;width:26px;height:10px;background:#9aa59f;border-radius:50%;"></div><div style="position:absolute;left:580px;top:19px;width:43px;height:29px;background:#9aa59f;border-radius:50%;"></div><div style="position:absolute;left:26px;top:9px;width:59px;height:22px;background:#4a5550;border-radius:50%;"></div><div style="position:absolute;left:152px;top:81px;width:42px;height:29px;background:#b9c0bb;border-radius:50%;"></div><div style="position:absolute;left:372px;top:60px;width:27px;height:25px;background:#9aa59f;border-radius:50%;"></div><div style="position:absolute;left:477px;top:61px;width:39px;height:12px;background:#5f6b66;border-radius:50%;"></div><div style="position:absolute;left:147px;top:13px;width:36px;height:25px;background:#b9c0bb;border-radius:50%;"></div><div style="position:absolute;left:848px;top:88px;width:53px;height:10px;background:#4a5550;border-radius:50%;"></div><div style="position:absolute;left:210px;top:67px;width:29px;height:27px;background:#b9c0bb;border-radius:50%;"></div><div style="position:absolute;left:27px;top:97px;width:25px;height:18px;background:#b9c0bb;border-radius:50%;"></div><div style="position:absolute;left:530px;top:46px;width:42px;height:17px;background:#4a5550;border-radius:50%;"></div><div style="position:absolute;left:545px;top:69px;width:60px;height:17px;background:#b9c0bb;border-radius:50%;"></div><div style="position:absolute;left:627px;top:103px;width:35px;height:22px;background:#4a5550;border-radius:50%;"></div><div style="position:absolute;left:757px;top:102px;width:32px;height:26px;background:#4a5550;border-radius:50%;"></div><div style="position:absolute;left:504px;top:45px;width:21px;height:18px;background:#9aa59f;border-radius:50%;"></div><div style="position:absolute;left:483px;top:33px;width:58px;height:21px;background:#4a5550;border-radius:50%;"></div><div style="position:absolute;left:457px;top:103px;width:43px;height:12px;background:#b9c0bb;border-radius:50%;"></div><div style="position:absolute;left:225px;top:13px;width:50px;height:16px;background:#4a5550;border-radius:50%;"></div><div style="position:absolute;left:345px;top:26px;width:59px;height:29px;background:#5f6b66;border-radius:50%;"></div><div style="position:absolute;left:860px;top:0px;width:42px;height:30px;background:#5f6b66;border-radius:50%;"></div><div style="position:absolute;left:86px;top:106px;width:44px;height:16px;background:#9aa59f;border-radius:50%;"></div><div style="position:absolute;left:489px;top:113px;width:47px;height:30px;background:#4a5550;border-radius:50%;"></div><div style="position:absolute;left:340px;top:11px;width:49px;height:22px;background:#5f6b66;border-radius:50%;"></div><div style="position:absolute;left:0px;top:45px;width:380px;height:40px;background:#5fb1ad;transform:skewY(6deg);"></div><div style="position:absolute;left:820px;top:110px;width:106px;height:60px;background:#5aa8a3;"></div><div style="position:absolute;left:3px;top:57px;width:430px;height:300px;background:#efc8e8;clip-path:polygon(0 0,100% 17%,100% 99%,0 100%);"></div><div style="position:absolute;left:115px;top:125px;width:230px;height:6px;background:#b79ab3;"></div><div style="position:absolute;left:115px;top:141px;width:230px;height:6px;background:#b79ab3;"></div><div style="position:absolute;left:115px;top:157px;width:230px;height:6px;background:#b79ab3;"></div><div style="position:absolute;left:115px;top:173px;width:230px;height:6px;background:#b79ab3;"></div><div style="position:absolute;left:115px;top:189px;width:230px;height:6px;background:#b79ab3;"></div><div style="position:absolute;left:115px;top:205px;width:230px;height:6px;background:#b79ab3;"></div><div style="position:absolute;left:115px;top:221px;width:230px;height:6px;background:#b79ab3;"></div><div style="position:absolute;left:115px;top:237px;width:230px;height:6px;background:#b79ab3;"></div><div style="position:absolute;left:115px;top:253px;width:230px;height:6px;background:#b79ab3;"></div><div style="position:absolute;left:115px;top:269px;width:230px;height:6px;background:#b79ab3;"></div><div style="position:absolute;left:115px;top:285px;width:230px;height:6px;background:#b79ab3;"></div><div style="position:absolute;left:115px;top:301px;width:230px;height:6px;background:#b79ab3;"></div><div style="position:absolute;left:100px;top:95px;width:60px;height:10px;background:#7a5a75;"></div><div style="position:absolute;left:290px;top:110px;width:40px;height:14px;background:#4a3b4a;"></div><div style="position:absolute;left:432px;top:97px;width:307px;height:273px;background:#6cb9d7;"></div><div style="position:absolute;left:480px;top:185px;width:220px;height:22px;background:#e9f3f8;"></div><div style="position:absolute;left:545px;top:155px;width:90px;height:8px;background:#a8d5e6;"></div><div style="position:absolute;left:747px;top:158px;width:179px;height:193px;background:#efcbe6;"></div><div style="position:absolute;left:800px;top:190px;width:100px;height:5px;background:#c7a9c2;"></div><div style="position:absolute;left:800px;top:206px;width:100px;height:5px;background:#c7a9c2;"></div><div style="position:absolute;left:800px;top:222px;width:100px;height:5px;background:#c7a9c2;"></div><div style="position:absolute;left:800px;top:238px;width:100px;height:5px;background:#c7a9c2;"></div><div style="position:absolute;left:800px;top:254px;width:100px;height:5px;background:#c7a9c2;"></div><div style="position:absolute;left:800px;top:270px;width:100px;height:5px;background:#c7a9c2;"></div><div style="position:absolute;left:800px;top:286px;width:100px;height:5px;background:#c7a9c2;"></div><div style="position:absolute;left:800px;top:302px;width:100px;height:5px;background:#c7a9c2;"></div><div style="position:absolute;left:792px;top:255px;width:22px;height:100px;background:#4a2f35;border-radius:8px 8px 0 0;"></div><div style="position:absolute;left:626px;top:340px;width:30px;height:40px;background:#3c3f48;border-radius:40% 40% 0 0;"></div><div style="position:absolute;left:0px;top:362px;width:926px;height:159px;background:#3a3d47;"></div><div style="position:absolute;left:463px;top:479px;width:62px;height:67px;background:#6e737d;border-radius:45%;"></div><div style="position:absolute;left:194px;top:407px;width:60px;height:70px;background:#3e424b;border-radius:45%;"></div><div style="position:absolute;left:628px;top:407px;width:58px;height:49px;background:#4a4e58;border-radius:45%;"></div><div style="position:absolute;left:145px;top:383px;width:70px;height:32px;background:#3e424b;border-radius:45%;"></div><div style="position:absolute;left:609px;top:461px;width:69px;height:40px;background:#6e737d;border-radius:45%;"></div><div style="position:absolute;left:638px;top:363px;width:34px;height:33px;background:#3e424b;border-radius:45%;"></div><div style="position:absolute;left:36px;top:408px;width:68px;height:31px;background:#2b2e36;border-radius:45%;"></div><div style="position:absolute;left:796px;top:478px;width:58px;height:67px;background:#5a5f6a;border-radius:45%;"></div><div style="position:absolute;left:862px;top:410px;width:44px;height:70px;background:#3e424b;border-radius:45%;"></div><div style="position:absolute;left:301px;top:487px;width:35px;height:59px;background:#4a4e58;border-radius:45%;"></div><div style="position:absolute;left:670px;top:431px;width:65px;height:35px;background:#6e737d;border-radius:45%;"></div><div style="position:absolute;left:724px;top:425px;width:44px;height:62px;background:#5a5f6a;border-radius:45%;"></div><div style="position:absolute;left:295px;top:367px;width:66px;height:36px;background:#4a4e58;border-radius:45%;"></div><div style="position:absolute;left:410px;top:387px;width:54px;height:34px;background:#5a5f6a;border-radius:45%;"></div><div style="position:absolute;left:17px;top:360px;width:43px;height:33px;background:#2b2e36;border-radius:45%;"></div><div style="position:absolute;left:481px;top:456px;width:56px;height:34px;background:#6e737d;border-radius:45%;"></div><div style="position:absolute;left:579px;top:410px;width:51px;height:35px;background:#5a5f6a;border-radius:45%;"></div><div style="position:absolute;left:318px;top:445px;width:56px;height:37px;background:#4a4e58;border-radius:45%;"></div><div style="position:absolute;left:137px;top:423px;width:30px;height:33px;background:#4a4e58;border-radius:45%;"></div><div style="position:absolute;left:476px;top:484px;width:65px;height:42px;background:#2b2e36;border-radius:45%;"></div><div style="position:absolute;left:458px;top:490px;width:38px;height:56px;background:#2b2e36;border-radius:45%;"></div><div style="position:absolute;left:659px;top:458px;width:55px;height:56px;background:#4a4e58;border-radius:45%;"></div><div style="position:absolute;left:217px;top:360px;width:67px;height:49px;background:#5a5f6a;border-radius:45%;"></div><div style="position:absolute;left:20px;top:413px;width:55px;height:68px;background:#2b2e36;border-radius:45%;"></div><div style="position:absolute;left:657px;top:385px;width:39px;height:43px;background:#4a4e58;border-radius:45%;"></div><div style="position:absolute;left:452px;top:426px;width:69px;height:51px;background:#4a4e58;border-radius:45%;"></div><div style="position:absolute;left:850px;top:435px;width:34px;height:34px;background:#6e737d;border-radius:45%;"></div><div style="position:absolute;left:92px;top:413px;width:70px;height:45px;background:#3e424b;border-radius:45%;"></div><div style="position:absolute;left:15px;top:454px;width:69px;height:59px;background:#5a5f6a;border-radius:45%;"></div><div style="position:absolute;left:130px;top:483px;width:38px;height:54px;background:#3e424b;border-radius:45%;"></div><div style="position:absolute;left:187px;top:399px;width:44px;height:69px;background:#5a5f6a;border-radius:45%;"></div><div style="position:absolute;left:255px;top:408px;width:70px;height:65px;background:#2b2e36;border-radius:45%;"></div><div style="position:absolute;left:201px;top:459px;width:68px;height:35px;background:#6e737d;border-radius:45%;"></div><div style="position:absolute;left:431px;top:372px;width:36px;height:32px;background:#4a4e58;border-radius:45%;"></div><div style="position:absolute;left:524px;top:425px;width:55px;height:46px;background:#2b2e36;border-radius:45%;"></div><div style="position:absolute;left:430px;top:485px;width:63px;height:41px;background:#5a5f6a;border-radius:45%;"></div><div style="position:absolute;left:737px;top:377px;width:44px;height:60px;background:#2b2e36;border-radius:45%;"></div><div style="position:absolute;left:572px;top:378px;width:43px;height:43px;background:#5a5f6a;border-radius:45%;"></div><div style="position:absolute;left:766px;top:364px;width:47px;height:56px;background:#4a4e58;border-radius:45%;"></div><div style="position:absolute;left:456px;top:423px;width:32px;height:41px;background:#4a4e58;border-radius:45%;"></div><div style="position:absolute;left:470px;top:440px;width:130px;height:81px;background:#8e939c;border-radius:40% 40% 0 0;"></div><div style="position:absolute;left:560px;top:460px;width:110px;height:61px;background:#9aa0a8;border-radius:40% 40% 0 0;"></div></div></div></div>
<div class="t" style="left:-178.50px;width:200px;text-align:right;top:688.72px;font-size:12.4px;color:#1f1f1f;font-weight:400;-webkit-text-stroke:0.35px #1f1f1f;">36</div>
<div class="abs" style="left:163.5px;top:463.5px;width:6px;height:108px;border-radius:3px;background:#dadce0"></div>
<div class="abs" style="left:353px;top:207px;width:924.5px;height:520.5px;background:#fff;border-top:1px solid #dadce0;border-left:1px solid #dadce0;border-bottom:1px solid #dadce0;"></div>
<div class="t" style="left:316.40px;width:1000px;text-align:center;top:276.87px;font-size:41.62px;color:#000;font-weight:400;transform:scaleY(1.04);transform-origin:50% 0.8465em;">"Demo is works.any(), product is works.all()"</div>
<div class="t" style="left:316.30px;width:1000px;text-align:center;top:448.42px;font-size:20.3px;color:#000;font-weight:400;transform:scaleY(1.04);transform-origin:50% 0.8465em;">Where `works` is a boolean array of situations where your product “works” or not</div>
<div class="t" style="left:316.00px;width:1000px;text-align:center;top:472.12px;font-size:20.3px;color:#118d9b;font-weight:400;text-decoration:underline;text-decoration-skip-ink:none;transform:scaleY(1.04);transform-origin:50% 0.8465em;">https://x.com/ethanniser/status/1935056628350599473</div>
<div class="t" style="left:316.30px;width:1000px;text-align:center;top:545.22px;font-size:20.3px;color:#000;font-weight:400;transform:scaleY(1.04);transform-origin:50% 0.8465em;">Demo to Product Gap: The significant gap between a working demo and a reliable product</div>
<div class="t" style="left:316.50px;width:1000px;text-align:center;top:594.52px;font-size:20.3px;color:#000;font-weight:400;transform:scaleY(1.04);transform-origin:50% 0.8465em;">Full autonomy remains challenging, requiring careful incremental changes and robust</div>
<div class="t" style="left:316.00px;width:1000px;text-align:center;top:618.62px;font-size:20.3px;color:#000;font-weight:400;transform:scaleY(1.04);transform-origin:50% 0.8465em;">verification loops.</div>
<div class="t" style="left:316.00px;width:1000px;text-align:center;top:642.82px;font-size:20.3px;color:#118d9b;font-weight:400;text-decoration:underline;text-decoration-skip-ink:none;transform:scaleY(1.04);transform-origin:50% 0.8465em;">https://x.com/huwng_tran/status/1935056615692190087</div>
<div class="abs" style="left:0;top:0;width:1331px;height:86px;background:#f9fbfd"></div>
<div class="abs" style="left:0;top:0;width:1331px;height:2px;background:#000"></div>
<svg class="ic" style="left:13px;top:14px;width:21px;height:28px;" viewBox="0 0 21 28"><path d="M2.5 0H14l7 7v18.5a2.5 2.5 0 0 1-2.5 2.5h-16A2.5 2.5 0 0 1 0 25.5v-23A2.5 2.5 0 0 1 2.5 0z" fill="#f6b400"/><path d="M14 0l7 7h-5a2 2 0 0 1-2-2z" fill="#f29a00"/><rect x="4.6" y="12.4" width="11.8" height="7.4" fill="none" stroke="#fff" stroke-width="1.7"/></svg>
<div class="t" style="left:45.00px;top:12.88px;font-size:14.55px;color:#1f1f1f;font-weight:400;-webkit-text-stroke:0.2px #1f1f1f;">Slides on Karpathy's Slides - AI Startup School 2025 - http://latent.space/s3</div>
<div class="t" style="left:45.55px;top:33.81px;font-size:11.8px;color:#1f1f1f;font-weight:400;-webkit-text-stroke:0.2px #1f1f1f;">File</div>
<div class="t" style="left:76.45px;top:33.81px;font-size:11.8px;color:#1f1f1f;font-weight:400;-webkit-text-stroke:0.2px #1f1f1f;">Edit</div>
<div class="t" style="left:109.15px;top:33.81px;font-size:11.8px;color:#1f1f1f;font-weight:400;-webkit-text-stroke:0.2px #1f1f1f;">View</div>
<div class="t" style="left:146.35px;top:33.81px;font-size:11.8px;color:#1f1f1f;font-weight:400;-webkit-text-stroke:0.2px #1f1f1f;">Insert</div>
<div class="t" style="left:189.35px;top:33.81px;font-size:11.8px;color:#1f1f1f;font-weight:400;-webkit-text-stroke:0.2px #1f1f1f;">Format</div>
<div class="t" style="left:238.05px;top:33.81px;font-size:11.8px;color:#1f1f1f;font-weight:400;-webkit-text-stroke:0.2px #1f1f1f;">Slide</div>
<div class="t" style="left:277.15px;top:33.81px;font-size:11.8px;color:#1f1f1f;font-weight:400;-webkit-text-stroke:0.2px #1f1f1f;">Arrange</div>
<div class="t" style="left:332.45px;top:33.81px;font-size:11.8px;color:#1f1f1f;font-weight:400;-webkit-text-stroke:0.2px #1f1f1f;">Tools</div>
<div class="t" style="left:371.75px;top:33.81px;font-size:11.8px;color:#1f1f1f;font-weight:400;-webkit-text-stroke:0.2px #1f1f1f;">Extensions</div>
<div class="t" style="left:440.75px;top:33.81px;font-size:11.8px;color:#1f1f1f;font-weight:400;-webkit-text-stroke:0.2px #1f1f1f;">Help</div>
<svg class="ic" style="left:543px;top:15px;width:12.5px;height:12px;" viewBox="0 0 24 23"><path d="M12 2.2l2.9 6.5 7.1.7-5.3 4.7 1.5 7-6.2-3.6-6.2 3.6 1.5-7L2 9.4l7.1-.7z" fill="none" stroke="#1f1f1f" stroke-width="2.2" stroke-linejoin="round"/></svg>
<svg class="ic" style="left:568.0px;top:15.3px;width:13.5px;height:11px;" viewBox="0 0 24 20"><path d="M2 3.5a1.5 1.5 0 0 1 1.5-1.5h6l2 2h9a1.5 1.5 0 0 1 1.5 1.5v11a1.5 1.5 0 0 1-1.5 1.5h-17A1.5 1.5 0 0 1 2 16.5z" fill="none" stroke="#1f1f1f" stroke-width="2.4"/><path d="M7.5 11h8M12.5 8l3 3-3 3" fill="none" stroke="#1f1f1f" stroke-width="2.2"/></svg>
<svg class="ic" style="left:593px;top:14.6px;width:14.6px;height:11px;" viewBox="0 0 26 19"><path d="M6.5 17.5a5 5 0 0 1-.6-9.96A7.5 7.5 0 0 1 20 6.2a5.6 5.6 0 0 1 .2 11.3z" fill="none" stroke="#1f1f1f" stroke-width="2.2" stroke-linejoin="round"/><path d="M9.5 11.5l2.5 2.3 4.5-4.5" fill="none" stroke="#1f1f1f" stroke-width="2"/></svg>
<svg class="ic" style="left:1078.3px;top:15.8px;width:17.5px;height:17px;" viewBox="0 0 24 23.3"><path d="M4.3 9.2A8.8 8.8 0 1 1 3.4 13.2" fill="none" stroke="#1f1f1f" stroke-width="2.5"/><path d="M1.2 5.6l0.6 7.2 6.6-2.6z" fill="#1f1f1f"/><path d="M12.3 6.8v5.4l3.8 3.6" fill="none" stroke="#1f1f1f" stroke-width="2.4"/></svg>
<svg class="ic" style="left:1118.6px;top:18.2px;width:16.6px;height:16px;" viewBox="0 0 24 23.2"><path d="M1.8 1.8h20.4v15.8h-1.6v4.2l-4.2-4.2H1.8z" fill="none" stroke="#1f1f1f" stroke-width="2.6" stroke-linejoin="round"/><path d="M5.5 6.3h13M5.5 9.7h13M5.5 13.1h13" stroke="#1f1f1f" stroke-width="2"/></svg>
<svg class="ic" style="left:1161.5px;top:20px;width:17.5px;height:13px;" viewBox="0 0 26 19"><path d="M6.5 2h11a1.5 1.5 0 0 1 1.5 1.5v12a1.5 1.5 0 0 1-1.5 1.5h-14A1.5 1.5 0 0 1 2 15.5V7z" fill="none" stroke="#1f1f1f" stroke-width="2.4" stroke-linejoin="round"/><path d="M19 7.5l5-4v12l-5-4z" fill="#1f1f1f"/></svg>
<svg class="ic" style="left:1187.5px;top:24px;width:6px;height:3.2px;" viewBox="0 0 10 5"><path d="M0 0h10L5 5z" fill="#1f1f1f"/></svg>
<div class="abs" style="left:1211px;top:10px;width:110px;height:30.5px;border:1px solid #858a8e;border-radius:17px;"></div>
<div class="abs" style="left:1294px;top:10.5px;width:1px;height:31px;background:#858a8e"></div>
<div class="t" style="left:1225.20px;top:19.87px;font-size:12.2px;color:#1f1f1f;font-weight:400;-webkit-text-stroke:0.45px #1f1f1f;">Slideshow</div>
<svg class="ic" style="left:1305.5px;top:24px;width:5.5px;height:3.2px;" viewBox="0 0 10 5"><path d="M0 0h10L5 5z" fill="#1f1f1f"/></svg>
<div class="abs" style="left:1329px;top:17px;width:6px;height:16px;border-radius:3px;background:#c6dcf5"></div>
<div class="abs" style="left:10px;top:55px;width:1340px;height:31px;border-radius:16px;background:#eef2f8"></div>
<div class="abs" style="left:16.5px;top:59px;width:80px;height:22.5px;border-radius:12px;background:#fff"></div>
<svg class="ic" style="left:24.5px;top:64.5px;width:12px;height:12px;" viewBox="0 0 24 24"><circle cx="8.8" cy="8.8" r="7.2" fill="none" stroke="#1f1f1f" stroke-width="2.4"/><path d="M14 14l7.5 7.5" stroke="#1f1f1f" stroke-width="2.6"/></svg>
<div class="t" style="left:45.20px;top:64.28px;font-size:11.6px;color:#444746;font-weight:400;">Menus</div>
<svg class="ic" style="left:105.6px;top:66.6px;width:8.8px;height:8.2px;" viewBox="0 0 18 17"><path d="M9 1v15M1.5 8.5h15" stroke="#1f1f1f" stroke-width="2.6"/></svg>
<svg class="ic" style="left:128.8px;top:65.8px;width:14.5px;height:10.8px;" viewBox="0 0 29 21.6"><path d="M13 2.6H4.8a2.3 2.3 0 0 0-2.3 2.3v12.4a2.3 2.3 0 0 0 2.3 2.3h19.4a2.3 2.3 0 0 0 2.3-2.3V11.5" fill="none" stroke="#1f1f1f" stroke-width="2.9"/><path d="M21.8 -2.2Q22.6 3.2 28 4Q22.6 4.8 21.8 10.2Q21 4.8 15.6 4Q21 3.2 21.8 -2.2z" fill="#1f1f1f"/></svg>
<div class="sep" style="left:150.5px"></div>
<svg class="ic" style="left:161px;top:66px;width:11px;height:11px;" viewBox="0 0 11 11"><path d="M3.4 3.8H6.9a2.7 2.7 0 0 1 0 5.4H2.1" fill="none" stroke="#1f1f1f" stroke-width="1.35"/><path d="M0.7 3.8L3.9 0.9V6.7z" fill="#1f1f1f"/></svg>
<svg class="ic" style="left:185.2px;top:66px;width:11px;height:11px;" viewBox="0 0 11 11"><path d="M7.6 3.8H4.1a2.7 2.7 0 0 0 0 5.4H8.9" fill="none" stroke="#1f1f1f" stroke-width="1.35"/><path d="M10.3 3.8L7.1 0.9V6.7z" fill="#1f1f1f"/></svg>
<svg class="ic" style="left:209.8px;top:65.8px;width:14px;height:11.2px;" viewBox="0 0 28 22.4"><path d="M7 5.5V1.5h14v4" fill="none" stroke="#1f1f1f" stroke-width="2.6"/><path d="M6.5 16.5H2.3V9a3 3 0 0 1 3-3h17.4a3 3 0 0 1 3 3v7.5h-4.2" fill="none" stroke="#1f1f1f" stroke-width="2.6"/><rect x="7" y="13" width="14" height="8" fill="none" stroke="#1f1f1f" stroke-width="2.6"/></svg>
<svg class="ic" style="left:235.5px;top:64.3px;width:11.5px;height:13.8px;" viewBox="0 0 23 28"><rect x="3" y="1.5" width="18" height="6" rx="1.5" fill="none" stroke="#9aa0a6" stroke-width="2.6"/><path d="M3 4.5H1.5v7h10v4" fill="none" stroke="#9aa0a6" stroke-width="2.6"/><rect x="8.8" y="16" width="5" height="10.5" rx="2.4" fill="none" stroke="#9aa0a6" stroke-width="2.4"/></svg>
<svg class="ic" style="left:260.8px;top:64.8px;width:12.2px;height:12px;" viewBox="0 0 24 24"><circle cx="9.5" cy="9.5" r="7" fill="none" stroke="#1f1f1f" stroke-width="2.6"/><path d="M15 15l7 7" stroke="#1f1f1f" stroke-width="2.8"/><path d="M9.5 6v7M6 9.5h7" stroke="#1f1f1f" stroke-width="2.4"/></svg>
<div class="t" style="left:284.00px;top:64.95px;font-size:11.4px;color:#1f1f1f;font-weight:400;letter-spacing:-0.25px;-webkit-text-stroke:0.2px #1f1f1f;">119%</div>
<svg class="ic" style="left:330px;top:69.3px;width:5.8px;height:3.4px;" viewBox="0 0 10 5"><path d="M0 0h10L5 5z" fill="#1f1f1f"/></svg>
<div class="sep" style="left:346.5px"></div>
<div class="abs" style="left:350.6px;top:59.1px;width:22.6px;height:22.5px;border-radius:5px;background:#d3e3fd"></div>
<svg class="ic" style="left:357px;top:64px;width:10px;height:14px;" viewBox="0 0 10 14"><path d="M1.3 1.2L8.9 7.3L4.9 7.7L1.2 11.2Z" fill="none" stroke="#0b1f4a" stroke-width="1.45" stroke-linejoin="round"/><path d="M4.6 7.6L6.5 12.8" stroke="#0b1f4a" stroke-width="1.6"/></svg>
<svg class="ic" style="left:379px;top:64px;width:16px;height:12px;" viewBox="0 0 16 12"><path d="M1.1 1.95H8.9M5 1.95V11.2" stroke="#1f1f1f" stroke-width="1.45"/><path d="M8.7 5.3H13.7M11.2 5.3V11.2" stroke="#1f1f1f" stroke-width="1.4"/></svg>
<svg class="ic" style="left:405px;top:63px;width:16px;height:16px;" viewBox="0 0 16 16"><circle cx="5.95" cy="6.0" r="3.55" fill="none" stroke="#1f1f1f" stroke-width="1.35"/><path d="M12.2 6.1H13.9V13.9H6V11.9" fill="none" stroke="#1f1f1f" stroke-width="1.45" stroke-linejoin="round"/></svg>
<svg class="ic" style="left:432.8px;top:64.2px;width:11px;height:11.5px;" viewBox="0 0 22 23"><path d="M3 3l16 17" stroke="#1f1f1f" stroke-width="2.6"/><circle cx="3" cy="3" r="2.8" fill="#1f1f1f"/><circle cx="19" cy="20" r="2.8" fill="#1f1f1f"/></svg>
<svg class="ic" style="left:452.5px;top:69.2px;width:6px;height:3.4px;" viewBox="0 0 10 5"><path d="M0 0h10L5 5z" fill="#1f1f1f"/></svg>
<div class="sep" style="left:463.2px"></div>
<svg class="ic" style="left:472px;top:64px;width:15px;height:14px;" viewBox="0 0 15 14"><path d="M1.4 1.5H13.5V10.2H3.7L1.4 12.5Z" fill="none" stroke="#1f1f1f" stroke-width="1.4" stroke-linejoin="round"/><path d="M7.45 3.5V8.3M5.05 5.9H9.85" stroke="#1f1f1f" stroke-width="1.5"/></svg>
<div class="sep" style="left:494.5px"></div>
<div class="t" style="left:504.80px;top:64.81px;font-size:11.8px;color:#3c4043;font-weight:400;letter-spacing:0.05px;-webkit-text-stroke:0.4px #3c4043;">Background</div>
<div class="sep" style="left:579.5px"></div>
<div class="t" style="left:587.20px;top:64.81px;font-size:11.8px;color:#3c4043;font-weight:400;letter-spacing:0.05px;-webkit-text-stroke:0.4px #3c4043;">Layout</div>
<div class="sep" style="left:632.5px"></div>
<div class="t" style="left:643.00px;top:64.81px;font-size:11.8px;color:#3c4043;font-weight:400;letter-spacing:0.05px;-webkit-text-stroke:0.4px #3c4043;">Theme</div>
<div class="sep" style="left:689.7px"></div>
<div class="t" style="left:700.80px;top:64.81px;font-size:11.8px;color:#3c4043;font-weight:400;letter-spacing:0.05px;-webkit-text-stroke:0.4px #3c4043;">Transition</div>
</body></html>
